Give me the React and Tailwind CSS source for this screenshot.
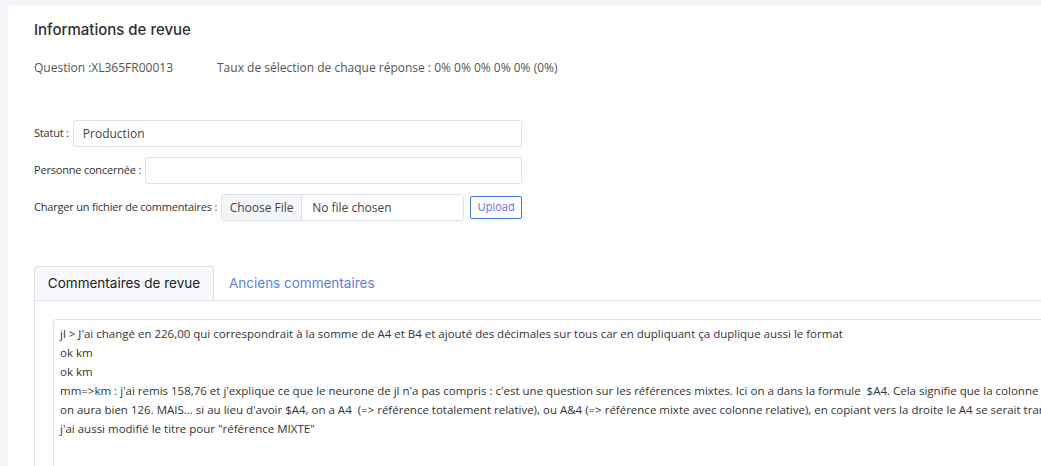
import { useState } from 'react';

const body = { fontFamily: '"Open Sans", "Noto Sans", sans-serif' };
const head = { fontFamily: 'Inter, "Noto Sans", sans-serif' };

const comments = [
  "jl > J'ai changé en 226,00 qui correspondrait à la somme de A4 et B4 et ajouté des décimales sur tous car en dupliquant ça duplique aussi le format",
  'ok km',
  'ok km',
  "mm=>km : j'ai remis 158,76 et j'explique ce que le neurone de jl n'a pas compris : c'est une question sur les références mixtes. Ici on a dans la formule  $A4. Cela signifie que la colonne A",
  "on aura bien 126. MAIS... si au lieu d'avoir $A4, on a A4  (=> référence totalement relative), ou A&4 (=> référence mixte avec colonne relative), en copiant vers la droite le A4 se serait tran",
  'j\'ai aussi modifié le titre pour "référence MIXTE"',
];

const App = () => {
  const [tab, setTab] = useState('revue');

  return (
    <div className="min-h-screen w-[1041px] h-[466px] overflow-hidden bg-[#f4f5f9] pl-2 pt-[5px]" style={body}>
      <div className="w-[1200px] h-[600px] bg-white rounded-[4px] pl-[26px] pt-[14px]">
        {/* Header */}
        <h1 className="text-[15px] font-medium text-[#2f2f33] leading-[22px]" style={head}>
          Informations de revue
        </h1>
        <div className="flex mt-[18px] text-[12px] text-[#555] leading-[18px]">
          <span className="w-[183px]">Question :XL365FR00013</span>
          <span>Taux de sélection de chaque réponse : 0% 0% 0% 0% 0% (0%)</span>
        </div>

        {/* Form */}
        <div className="mt-[43px] flex flex-col gap-[10px] text-[11px] tracking-[-0.2px] text-[#333]">
          <div className="flex items-center gap-[4px]">
            <label>Statut :</label>
            <input
              defaultValue="Production"
              className="w-[449px] h-[27px] border border-[#dfe3e9] rounded-[3px] px-[9px] text-[12px] tracking-normal text-[#444] outline-none"
            />
          </div>
          <div className="flex items-center gap-[4px]">
            <label>Personne concernée :</label>
            <input className="w-[377px] h-[27px] border border-[#dfe3e9] rounded-[3px] px-[9px] outline-none" />
          </div>
          <div className="flex items-center gap-[4px]">
            <label>Charger un fichier de commentaires :</label>
            <div className="flex w-[243px] h-[27px] border border-[#dfe3e9] rounded-[3px] overflow-hidden text-[12px] tracking-normal text-[#444]">
              <span className="w-[80px] bg-[#f3f5f8] border-r border-[#dfe3e9] flex items-center justify-center">Choose File</span>
              <span className="flex items-center pl-[10px]">No file chosen</span>
            </div>
            <button
              className="ml-[2px] h-[23px] w-[52px] border border-[#3a7be0] rounded-[2px] text-[11px] tracking-normal text-[#6f7fe3] bg-white"
              style={head}
            >
              Upload
            </button>
          </div>
        </div>

        {/* Tabs */}
        <div className="mt-[45px] flex border-b border-[#dee2e6] text-[13.5px]" style={head}>
          <button
            onClick={() => setTab('revue')}
            className="w-[180px] h-[34px] -mb-px bg-[#f6f8fb] border border-[#dee2e6] border-b-[#f6f8fb] rounded-tl-[4px] text-[#222]"
          >
            Commentaires de revue
          </button>
          <button onClick={() => setTab('anciens')} className="px-[15px] h-[34px] text-[#5a80e6]">
            Anciens commentaires
          </button>
        </div>
        <div className="border-l border-[#e6e3dd] pl-[18px] pt-[18px] h-[200px]">
          <div className="border border-[#dee2e6] rounded-[3px] h-[200px] pl-[6px] pt-[4px] text-[11.5px] text-[#333] leading-[19px] overflow-hidden">
            {comments.map((line, i) => (
              <div key={i} className="whitespace-pre">{line}</div>
            ))}
          </div>
        </div>
      </div>
    </div>
  );
};

export default App;
